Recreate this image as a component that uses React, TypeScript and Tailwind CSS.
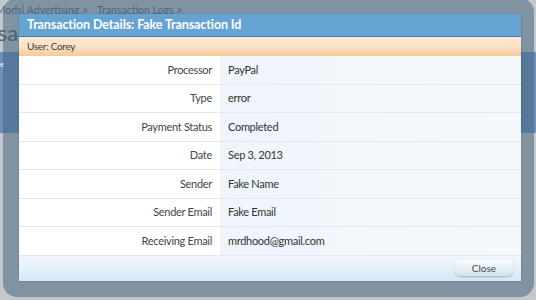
import React from "react";

const rows: [string, string][] = [
  ["Processor", "PayPal"],
  ["Type", "error"],
  ["Payment Status", "Completed"],
  ["Date", "Sep 3, 2013"],
  ["Sender", "Fake Name"],
  ["Sender Email", "Fake Email"],
  ["Receiving Email", "mrdhood@gmail.com"],
];

export default function App() {
  return (
    <div
      className="relative w-[536px] h-[300px] overflow-hidden bg-[#c4c8cb]"
      style={{ fontFamily: 'Lato, "Open Sans", sans-serif' }}
    >
      {/* dimmed page behind */}
      <div className="flex flex-col">
        <div className="h-[21px] flex items-center gap-[9px] text-[10.5px] text-[#5d6d79] whitespace-nowrap">
          <span className="w-[88px] flex justify-end overflow-hidden">[XenMods] Advertising &gt;</span>
          <span>Transaction Logs &gt;</span>
        </div>
        <div className="h-[31px] ml-[-44px] text-[22px] leading-[24px] text-[#52606a] whitespace-nowrap">Transaction Logs</div>
        <div className="h-[81px] bg-[#6d8fbb] text-[8px] text-white pt-[6px]">e</div>
      </div>

      {/* overlay frame */}
      <div className="absolute left-[3px] top-[-2px] w-[531px] h-[299px] rounded-[14px] bg-[rgba(66,101,127,0.53)] pl-[16px] pt-[16px]">
        <div className="w-[502px] h-[267px] flex flex-col bg-white shadow-[0_0_2px_rgba(0,0,0,0.2)]">
          <div className="h-[23px] bg-[#64a3d2] border-b border-[#3f7aa6] flex items-center pl-[8px] text-[12.5px] font-bold text-white tracking-[-0.1px]">
            Transaction Details: Fake Transaction Id
          </div>
          <div className="h-[19px] bg-gradient-to-b from-[#fde9d2] via-[#fbe3c6] to-[#f6c89a] flex items-center pl-[8px] text-[10px] tracking-[-0.3px] text-[#4b3a2a]">
            User: Corey
          </div>
          <div className="flex flex-col">
            {rows.map(([label, value]) => (
              <div key={label} className="h-[28.5px] flex border-b border-[#e1e8ee]">
                <div className="w-[201px] bg-white flex items-center justify-end pr-[8px] text-[11px] tracking-[-0.3px] text-[#454545]">
                  {label}
                </div>
                <div className="flex-1 bg-gradient-to-r from-[#eef5fb] to-[#f5f9fc] flex items-center pl-[8px] text-[11px] tracking-[-0.3px] text-[#333]">
                  {value}
                </div>
              </div>
            ))}
          </div>
          <div className="flex-1 bg-gradient-to-b from-[#f1f7fb] to-[#d5e9f6] flex items-center justify-end pr-[8px]">
            <button className="w-[58px] h-[16px] rounded-[6px] bg-gradient-to-b from-[#fbfdfe] to-[#d3e4f0] shadow-[0_1px_2px_rgba(0,0,0,0.25)] text-[10px] text-[#444] leading-[16px]">
              Close
            </button>
          </div>
        </div>
      </div>
    </div>
  );
}
